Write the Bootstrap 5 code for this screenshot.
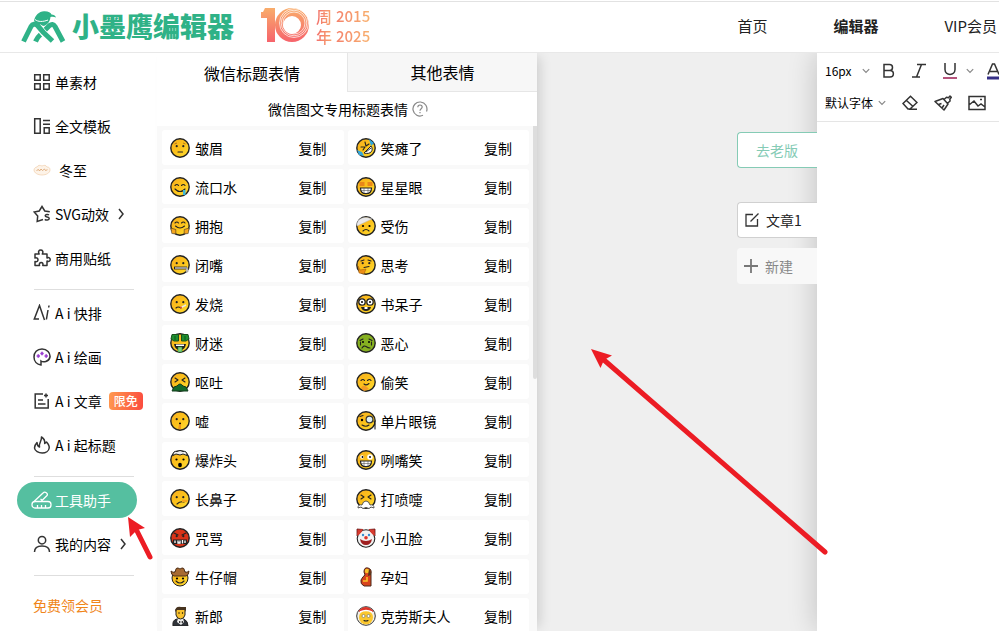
<!DOCTYPE html>
<html lang="zh-CN">
<head>
<meta charset="utf-8">
<meta name="viewport" content="width=device-width, initial-scale=1">
<title>小墨鹰编辑器</title>
<link href="https://cdn.jsdelivr.net/npm/bootstrap@5.3.0/dist/css/bootstrap.min.css" rel="stylesheet">
<style>
  body { font-family: "Noto Sans CJK SC", "Noto Sans", sans-serif; font-size: 14px; line-height: 20px; color: #000; background: #fff; }
  button { color: inherit; }
  svg { flex-shrink: 0; display: block; }
  .ln { fill: none; stroke: #333; stroke-width: 1.5; }
  .site-head { height: 53px; border-bottom: 1px solid #e8e8e8; background: linear-gradient(#fff 1px, #e2e2e2 1px, #e2e2e2 2px, #fff 2px); z-index: 5; }
  .brand { color: #2fb287; font-size: 27px; font-weight: 900; line-height: 40px; text-decoration: none; padding-left: 20px; gap: 6px; }
  .anniv { margin-left: 26px; gap: 6px; }
  .anniv span { line-height: 20px; background: linear-gradient(90deg, #f2706c, #f8a56d); -webkit-background-clip: text; background-clip: text; color: transparent; font-weight: 500; }
  .anniv .zh { font-size: 16px; }
  .anniv .yr { font-size: 15px; background-image: linear-gradient(90deg, #f4826c, #f8b06d); }
  .top-links { gap: 66px; font-size: 15px; padding-right: 2px; }
  .top-links a { color: #222; text-decoration: none; white-space: nowrap; }

  .side { width: 157px; padding: 7px 0 0 17px; }
  .side-link { height: 36px; margin: 4px 0; width: 120px; padding-left: 16px; gap: 4px; color: #000; text-decoration: none; white-space: nowrap; border-radius: 18px; flex-shrink: 0; }
  .side-link.on { background: #55bfa0; color: #fff; padding-left: 14px; gap: 3px; }
  .side-rule { width: 100px; margin: 9px 0 1px 17px; border-top: 1px solid #dedede; opacity: 1; flex-shrink: 0; }
  .hot { background: linear-gradient(100deg, #ff9a50, #fb4a3e); color: #fff; font-size: 12px; line-height: 18px; font-weight: 500; border-radius: 4px; padding: 0 5px; margin-left: 3px; }
  .side .vip { color: #f08519; margin-top: 10px; }

  .panel { width: 380px; background: #fff; box-shadow: 6px 0 12px -4px rgba(0,0,0,.16); }
  .tab-btn { height: 39px; font-size: 16px; border: 0; background: #fff; }
  .tab-btn.off { background: #f7f7f7; border-left: 1px solid #e6e6e6; border-bottom: 1px solid #e6e6e6; }
  .hint { height: 34px; gap: 4px; padding-left: 2px; }
  .scroller { background: #f9f9f9; }
  .thumb { width: 4px; height: 253px; background: #ddd; border-radius: 0 0 2px 2px; }
  .cards { display: grid; grid-template-columns: 1fr 1fr; gap: 4px; padding: 4px 4px 0 5px; }
  .cell { height: 35px; background: #fff; border-radius: 3px; padding: 0 17px 0 8px; gap: 5px; }
  .cell button { border: 0; background: none; padding: 0; margin-left: auto; }
  .cell svg { width: 20px; height: 20px; }
  .k { fill: none; stroke: #222; stroke-width: 1.1; stroke-linecap: round; stroke-linejoin: round; }

  .board { background: #efefef; }
  .side-btns { width: 80px; padding-top: 79px; z-index: 2; }
  .side-btns button { height: 36px; border: 1px solid #d0d0d0; border-right: 0; border-radius: 4px 0 0 4px; background: #fff; padding: 0 0 0 7px; gap: 7px; color: #222; white-space: nowrap; }
  .side-btns .old { border-color: #85cbb5; color: #85cbb5; padding-left: 18px; margin-bottom: 34px; }
  .side-btns .new { background: #f8f8f8; border-color: #f8f8f8; color: #888; margin-top: 10px; padding-left: 6px; }

  .editor { width: 182px; background: #fff; box-shadow: 0 0 28px rgba(0,0,0,.2); z-index: 1; }
  .tools { border-bottom: 1px solid #e5e5e5; padding: 2px 0 2px 8px; }
  .tool-row { height: 32px; width: 200px; }
  .tool-row select { appearance: none; border: 0; background: none; padding: 0; font-size: 12px; color: #000; flex-shrink: 0; }
  .tool-row button { border: 0; background: none; padding: 0; }
  .tool-row .pick-size { width: 37px; }
  .tool-row .pick-font { width: 53px; }
  .arrows { left: 0; top: 0; z-index: 9; pointer-events: none; }
</style>
<script src="https://cdn.jsdelivr.net/npm/bootstrap@5.3.0/dist/js/bootstrap.bundle.min.js"></script>
</head>
<body class="vh-100 overflow-hidden position-relative d-flex flex-column">

<svg width="0" height="0" class="position-absolute" aria-hidden="true">
  <defs>
    <linearGradient id="gface" x1="0" y1="0" x2="1" y2="1"><stop offset="0" stop-color="#f6ad20"/><stop offset=".5" stop-color="#fcc21b"/><stop offset="1" stop-color="#ffdf35"/></linearGradient>
    <linearGradient id="gten" gradientUnits="userSpaceOnUse" x1="0" y1="0" x2="0" y2="36"><stop offset="0" stop-color="#f9b16b"/><stop offset="1" stop-color="#f6636b"/></linearGradient>
    <symbol id="face" viewBox="0 0 20 20"><circle cx="10" cy="10" r="9.200" fill="url(#gface)" stroke="#222" stroke-width="1.400"/></symbol>
    <symbol id="eyes" viewBox="0 0 20 20"><circle cx="6.700" cy="8.200" r="1.100" fill="#222"/><circle cx="13.300" cy="8.200" r="1.100" fill="#222"/></symbol>
    <symbol id="grin" viewBox="0 0 20 20"><path d="M4.500 11h11c0 3.500-2 5.700-5.500 5.700S4.500 14.500 4.500 11z" fill="#fff" stroke="#222" stroke-width="1.200"/><path d="M5 13.500h10M8 11v5M12 11v5" stroke="#555" stroke-width=".6"/></symbol>
    <symbol id="chev" viewBox="0 0 8 8"><path d="M.8 2.200L4 5.500l3.200-3.300" fill="none" stroke="#888" stroke-width="1.200"/></symbol>
  </defs>
</svg>

<header class="site-head d-flex align-items-center position-relative flex-shrink-0">
  <a class="brand d-flex align-items-center" href="#">
    <svg width="46" height="33" viewBox="0 0 46 33">
      <path d="M14 11C15 5 19 1.500 24 1.200c4-.2 7 1.300 7.500 3.300 2 0 4 1 4.500 3-2-1-4-1-5.500-.5C30 11 28 14.500 24 16c-4-1-8-2-10-5z" fill="#2fb287"/>
      <path d="M15 9.500c3 2.500 8 2.500 13 .5" fill="none" stroke="#fff" stroke-width="1"/>
      <g fill="none" stroke-linejoin="round">
        <path d="M15.500 31.500c2-5 5-7 8-10l6-6c2-1.500 4-1.500 5.500 1l8 15" stroke="#2fb287" stroke-width="5"/>
        <path d="M18 16.500l6 7 8 7.500" stroke="#fff" stroke-width="7"/>
        <path d="M3.500 31.500l7.500-15c1.500-2.500 4.500-3 6.500-1l6 7 9 8.500" stroke="#2fb287" stroke-width="5"/>
      </g>
    </svg>
    <span>小墨鹰编辑器</span>
  </a>
  <div class="anniv d-flex align-items-center">
    <svg width="50" height="40" viewBox="0 0 50 40" role="img" aria-label="10">
      <path d="M5 2h10v34H7V12H1V6h2z" fill="url(#gten)"/>
      <circle cx="32" cy="19" r="13" fill="none" stroke="url(#gten)" stroke-width="8"/>
      <g fill="none" stroke="#fff" stroke-width=".7"><circle cx="34" cy="17" r="11"/><circle cx="34" cy="17" r="12.800"/><circle cx="34" cy="17" r="14.500"/></g>
    </svg>
    <div class="d-flex gap-1">
      <span class="zh">周<br>年</span><span class="yr">2015<br>2025</span>
    </div>
  </div>
  <nav class="top-links d-flex ms-auto">
    <a href="#">首页</a><a href="#" class="fw-bold">编辑器</a><a href="#">VIP会员</a>
  </nav>
</header>

<main class="d-flex flex-grow-1 overflow-hidden">
  <nav class="side flex-shrink-0 d-flex flex-column">
    <a href="#" class="side-link d-flex align-items-center"><svg width="18" height="18" viewBox="0 0 18 18"><path class="ln" d="M1.700 1.700h5.500v5.500H1.700zM10.700 1.700h5.500v5.500h-5.500zM1.700 10.700h5.500v5.500H1.700zM10.700 10.700h5.500v5.500h-5.500z"/></svg>单素材</a>
    <a href="#" class="side-link d-flex align-items-center"><svg width="18" height="18" viewBox="0 0 18 18"><path class="ln" d="M1.700 1.700h5.500v14.500H1.700zM11.200 10.700h5v5.500h-5zM10 3.500h7M10 7.200h7"/></svg>全文模板</a>
    <a href="#" class="side-link d-flex align-items-center"><svg width="18" height="18" viewBox="0 0 18 18"><path d="M1 9c0-2 2-3 3-3 1-2 3-2 5-1 2-1 4-1 5 1 2 0 3 1 3 3 0 3-4 5-8 5s-8-2-8-5z" fill="#fdf3e8" stroke="#f0cfac" stroke-width=".7"/><path d="M3.500 9.500l2-1 1 1.500 1.500-2 1.500 1.500 2-1.500 1 1.500 2-.8" fill="none" stroke="#d9a06a" stroke-width=".8"/></svg><span class="ms-1">冬至</span></a>
    <a href="#" class="side-link d-flex align-items-center"><svg width="18" height="18" viewBox="0 0 18 18"><path class="ln" d="M10 14.500L4.200 16.500l.5-5.500L1.200 7l5-1L9 1.500 11.800 6l5 .8"/><path class="ln" d="M16 10c-1-.8-3.800-.8-3.800.8 0 1.700 4 .8 4 2.700 0 1.800-3.200 1.800-4.400.8"/></svg>SVG动效<svg class="ms-1" width="8" height="12" viewBox="0 0 8 12"><path class="ln" d="M2 1l4 5-4 5"/></svg></a>
    <a href="#" class="side-link d-flex align-items-center"><svg width="18" height="18" viewBox="0 0 18 18"><path class="ln" stroke-linejoin="round" d="M2 5h4.200C4.800 2.500 6 1 7.700 1s3 1.500 1.600 4H14v4c2-1 3.200 0 3.200 1.500S16 13 14 12v4.500H9.800c.5-2-.3-3-1.600-3s-2.200 1-1.700 3H2V12.500c2 .5 3-.4 3-1.700S4 8.500 2 9z"/></svg>商用贴纸</a>
    <hr class="side-rule">
    <a href="#" class="side-link d-flex align-items-center"><svg width="18" height="18" viewBox="0 0 18 18"><path class="ln" d="M6 15H1.300L6.500 1.500 11.500 16M15 6l-1.600 9.500M16 1.500l-.3 2"/></svg>A i 快排</a>
    <a href="#" class="side-link d-flex align-items-center"><svg width="18" height="18" viewBox="0 0 18 18"><path class="ln" d="M8 17v-4c2 1.600 8 1 9-4 .5-4-3-8-8-8S1 4.500 1 9s3 7.500 7 8z"/><path d="M5.300 6.300v3.400M3.600 8h3.400M9 3.800v3.400M7.300 5.500h3.400M13.200 6.300v3.400M11.500 8h3.400" stroke="#9a3fd0" stroke-width="1.700"/></svg>A i 绘画</a>
    <a href="#" class="side-link d-flex align-items-center"><svg width="18" height="18" viewBox="0 0 18 18"><path class="ln" d="M10 2H2.200v14h13V7M5 8h5M5 12h7.500M13 1.500v4M11 3.500h4"/></svg>A i 文章 <span class="hot">限免</span></a>
    <a href="#" class="side-link d-flex align-items-center"><svg width="18" height="18" viewBox="0 0 18 18"><path class="ln" stroke-linejoin="round" d="M6.500 11C5.500 7 9 5 8.500 1c2.500 1.500 3.500 4 3.200 6.500L13.500 6c2 2.300 3 4.200 2.700 6-.4 3-3.500 5-7 5S1.800 15 1.500 12c0-2 1-4 2.500-5.500 0 2 .6 3.800 2.500 4.500z"/></svg>A i 起标题</a>
    <hr class="side-rule">
    <a href="#" class="side-link on d-flex align-items-center"><svg width="21" height="18" viewBox="0 0 21 18"><g fill="none" stroke="#fff" stroke-width="1.300"><rect x="1" y="10.500" width="19" height="6.500" rx="3"/><path d="M2.500 11L12 2c2-2 5.500.5 4 2.500l-6 6M6.500 14v3M10.500 14v3M14.500 14v3M9.500 8l1.500 1"/></g></svg><span>工具助手</span></a>
    <a href="#" class="side-link d-flex align-items-center"><svg width="18" height="18" viewBox="0 0 18 18"><circle class="ln" cx="9" cy="5.200" r="3.700"/><path class="ln" d="M1.500 17c0-4 3-6 7.500-6s7.500 2 7.500 6"/></svg>我的内容<svg class="ms-1" width="8" height="12" viewBox="0 0 8 12"><path class="ln" d="M2 1l4 5-4 5"/></svg></a>
    <hr class="side-rule">
    <a href="#" class="side-link vip d-flex align-items-center">免费领会员</a>
  </nav>

  <section class="panel flex-shrink-0 d-flex flex-column position-relative z-1">
    <div class="d-flex">
      <button class="tab-btn w-50">微信标题表情</button><button class="tab-btn off w-50">其他表情</button>
    </div>
    <div class="hint d-flex align-items-center justify-content-center flex-shrink-0">微信图文专用标题表情<svg width="16" height="16" viewBox="0 0 16 16"><path d="M11 14.300A7 7 0 1 1 14.500 10.500" fill="none" stroke="#888" stroke-width="1.200"/><path d="M5.800 6.300c0-3 4.400-3 4.400-.2C10.200 7.700 8 7.800 8 9.700M8 11v1.300" fill="none" stroke="#888" stroke-width="1.200"/></svg></div>
    <div class="scroller d-flex flex-grow-1">
      <div class="cards flex-grow-1 align-content-start">
        <div class="cell d-flex align-items-center"><svg viewBox="0 0 20 20"><use href="#face"/><use href="#eyes"/><path class="k" d="M8 14h4.500"/><path d="M4.500 6l2.500-1M13 5l2.500 1" stroke="#b5761a" fill="none"/></svg>皱眉<button>复制</button></div>
        <div class="cell d-flex align-items-center"><svg viewBox="0 0 20 20"><use href="#face"/><path d="M1 12l5 2 2 4-5-1zM13 1l5 4-3 3z" fill="#31a8dc"/><path class="k" d="M5 9l4 0-2 3M9 4l1 4 3-2"/><path d="M8 15l7-7c3 4 0 9-7 7z" fill="#fff" stroke="#222"/><path d="M10 14l5-4" stroke="#333"/></svg>笑瘫了<button>复制</button></div>

        <div class="cell d-flex align-items-center"><svg viewBox="0 0 20 20"><use href="#face"/><path class="k" d="M5 8.500q2-2 3.500 0M11.500 8.500q2-2 3.500 0M5 12q5 5 10 0"/><path d="M13 13h2.500v5H13z" fill="#3cb7dc"/></svg>流口水<button>复制</button></div>
        <div class="cell d-flex align-items-center"><svg viewBox="0 0 20 20"><use href="#face"/><path d="M3.500 5h5v4h-5zM11.500 5h5v4h-5z" fill="#e98719"/><use href="#grin"/></svg>星星眼<button>复制</button></div>

        <div class="cell d-flex align-items-center"><svg viewBox="0 0 20 20"><use href="#face"/><path class="k" d="M5 7q2-2 3.500 0M11.500 7q2-2 3.500 0M5.500 10q4.500 4 9 0"/><path d="M.8 12l5 1.500V18l-4-.5zM19.200 12l-5 1.500V18l4-.5z" fill="#f4a51f" stroke="#222" stroke-width=".5"/></svg>拥抱<button>复制</button></div>
        <div class="cell d-flex align-items-center"><svg viewBox="0 0 20 20"><use href="#face"/><path d="M1 10C0 3 8-1 16 3z" fill="#e8e8ea" stroke="#bbb" stroke-width=".5"/><circle cx="7" cy="10" r="1.100"/><circle cx="13.500" cy="10" r="1.100"/><path class="k" d="M7 15q3-3 6 0"/></svg>受伤<button>复制</button></div>

        <div class="cell d-flex align-items-center"><svg viewBox="0 0 20 20"><use href="#face"/><use href="#eyes"/><path d="M4 13h13" stroke="#222" stroke-width="2.800"/><path d="M5 13h12" stroke="#ccc" stroke-width="1.400"/><path d="M16 13h2v4h-2z" fill="#ccc" stroke="#666" stroke-width=".4"/></svg>闭嘴<button>复制</button></div>
        <div class="cell d-flex align-items-center"><svg viewBox="0 0 20 20"><use href="#face"/><use href="#eyes"/><path class="k" d="M5 6l3-1M12 5l3 1M8 12.500l5-1"/><path d="M2 11l2 4 6-1-2 5-5-1z" fill="#ec8e16" stroke="#9a5a0c" stroke-width=".5"/></svg>思考<button>复制</button></div>

        <div class="cell d-flex align-items-center"><svg viewBox="0 0 20 20"><use href="#face"/><use href="#eyes"/><path class="k" d="M6 14q2-2 5 0"/><path d="M11 13.500l5-2.500" stroke="#e9e9e9" stroke-width="1.400"/><circle cx="11" cy="13.500" r="1" fill="#d43"/></svg>发烧<button>复制</button></div>
        <div class="cell d-flex align-items-center"><svg viewBox="0 0 20 20"><use href="#face"/><circle cx="6" cy="8" r="3.200" fill="#fff" stroke="#222" stroke-width="1.300"/><circle cx="14" cy="8" r="3.200" fill="#fff" stroke="#222" stroke-width="1.300"/><circle cx="6" cy="8" r="1"/><circle cx="14" cy="8" r="1"/><path d="M5 13h10q-1 4-5 4t-5-4z" fill="#222"/><path d="M8.500 13h3v2h-3z" fill="#fff"/></svg>书呆子<button>复制</button></div>

        <div class="cell d-flex align-items-center"><svg viewBox="0 0 20 20"><use href="#face"/><path d="M2 1.500h6.500V8H4L1 6zM11.500 1.500H18l1 4.500-3 2h-4.500z" fill="#1f8f30" stroke="#174f1c"/><path d="M5 3v4M15 3v4" stroke="#0c5a1a"/><path d="M4 11h12q-1 6-6 6t-6-6z" fill="#222"/><path d="M6 11.500h8V13H6z" fill="#fff"/><path d="M8 14h4v5H8z" fill="#7fd07f" stroke="#2a8a34" stroke-width=".6"/></svg>财迷<button>复制</button></div>
        <div class="cell d-flex align-items-center"><svg viewBox="0 0 20 20"><circle cx="10" cy="10" r="9.200" fill="#86b021" stroke="#222" stroke-width="1.400"/><circle cx="7" cy="9" r="1"/><circle cx="13" cy="9" r="1"/><path class="k" d="M4 7.500l3-1.500M16 7.500l-3-1.500M6 15q2-3 4-1.500T14 15M4.500 9v3M15.500 9v3"/></svg>恶心<button>复制</button></div>

        <div class="cell d-flex align-items-center"><svg viewBox="0 0 20 20"><use href="#face"/><path class="k" d="M5 6l3 2-3 2M15 6l-3 2 3 2"/><path d="M2 19l2-4 3-1q3-4 6 0l3 1 2 4z" fill="#146b2b" stroke="#123c1c"/></svg>呕吐<button>复制</button></div>
        <div class="cell d-flex align-items-center"><svg viewBox="0 0 20 20"><use href="#face"/><path class="k" d="M5 8.500q2-2 3.500 0M11.500 8.500q2-2 3.500 0M8 12q2 2 5-.5"/><path d="M5 16q2-4 6-1l2 2-5 2z" fill="#f39b26"/></svg>偷笑<button>复制</button></div>

        <div class="cell d-flex align-items-center"><svg viewBox="0 0 20 20"><use href="#face"/><use href="#eyes"/><circle cx="10" cy="12.500" r="1"/><path d="M9 13.500h2V18H8z" fill="#ec9621"/></svg>嘘<button>复制</button></div>
        <div class="cell d-flex align-items-center"><svg viewBox="0 0 20 20"><use href="#face"/><circle cx="6" cy="9" r="1.200"/><circle cx="13.500" cy="8.500" r="3.400" fill="#dceef2" stroke="#333" stroke-width="1.200"/><path class="k" d="M4 5.500l3-1M6 14q4 2.500 7 0M18 10l1 3v5"/></svg>单片眼镜<button>复制</button></div>

        <div class="cell d-flex align-items-center"><svg viewBox="0 0 20 20"><use href="#face"/><path d="M3 5.500q0-5 4-4 3-2 6 0 4-1 4 4l-4-1.500-3 1-4-1z" fill="#eee" stroke="#222"/><circle cx="6.500" cy="9.500" r="1.100"/><circle cx="13.500" cy="9.500" r="1.100"/><ellipse cx="10" cy="15" rx="1.900" ry="2.200"/></svg>爆炸头<button>复制</button></div>
        <div class="cell d-flex align-items-center"><svg viewBox="0 0 20 20"><use href="#face"/><circle cx="6" cy="7" r="1.800" fill="#fff"/><circle cx="14" cy="7" r="2.800" fill="#fff"/><circle cx="6.500" cy="7" r=".9"/><circle cx="14" cy="7" r=".9"/><use href="#grin"/></svg>咧嘴笑<button>复制</button></div>

        <div class="cell d-flex align-items-center"><svg viewBox="0 0 20 20"><use href="#face"/><use href="#eyes"/><path class="k" d="M7 15q3-3 7-2"/><path d="M12 10.500l6 .5-1 2-5 0z" fill="#f3a51f"/></svg>长鼻子<button>复制</button></div>
        <div class="cell d-flex align-items-center"><svg viewBox="0 0 20 20"><use href="#face"/><path class="k" d="M5 6l3 2-3 2M15 6l-3 2 3 2"/><path d="M2 19q0-4 4-3 1-4 4-4t4 4q4-1 4 3l-3-1-2 1.500-3-1-3 1-2-1.500z" fill="#fff" stroke="#333" stroke-width=".8"/></svg>打喷嚏<button>复制</button></div>

        <div class="cell d-flex align-items-center"><svg viewBox="0 0 20 20"><circle cx="10" cy="10" r="9.200" fill="#d93318" stroke="#222" stroke-width="1.400"/><use href="#eyes"/><path class="k" d="M4 5l4 2M16 5l-4 2"/><path d="M3 11.500h14v4.500H3z" fill="#222"/><path d="M5 12.500v2.500M8 12.500v2.500h2v-2.500M12.500 12v3.500M15 12.500v2.500" stroke="#fff" stroke-width="1.300" fill="none"/></svg>咒骂<button>复制</button></div>
        <div class="cell d-flex align-items-center"><svg viewBox="0 0 20 20"><path d="M1 8V1l6 .5zM19 8V1l-6 .5z" fill="#d73b2f" stroke="#611" stroke-width=".8"/><circle cx="10" cy="10.500" r="8.800" fill="#f2f2f2" stroke="#222" stroke-width="1.100"/><path d="M1 8q0-6 6-7-1 4-6 7zM19 8q0-6-6-7 1 4 6 7z" fill="#d73b2f"/><circle cx="7" cy="7" r="1.200" fill="#348ed0"/><circle cx="13" cy="7" r="1.200" fill="#348ed0"/><circle cx="10" cy="9.800" r="1.800" fill="#df3529"/><path d="M4 11q6 4 12 0-1 6-6 6t-6-6z" fill="#9f1f20"/></svg>小丑脸<button>复制</button></div>

        <div class="cell d-flex align-items-center"><svg viewBox="0 0 20 20"><circle cx="10" cy="11" r="8" fill="url(#gface)" stroke="#222"/><path d="M1 4q2 2 4 1 1-5 3-4l2 1 2-1q2-1 3 4 2 1 4-1 0 4-3 5H4Q1 8 1 4z" fill="#a76a32" stroke="#4f301a"/><circle cx="7" cy="11.500" r="1.100"/><circle cx="13" cy="11.500" r="1.100"/><path class="k" d="M6 14q4 4 8 0"/></svg>牛仔帽<button>复制</button></div>
        <div class="cell d-flex align-items-center"><svg viewBox="0 0 20 20"><path d="M8 5q0-5 4-4 4 1 3 6v12H8q-4-2-3-6 2-4 4-5z" fill="#d8441d" stroke="#48291c"/><circle cx="11" cy="4" r="2.200" fill="#fac32b"/><path d="M13 2q2 1 2 6l-3 1z" fill="#57371c"/><path d="M11 10v4H7" fill="none" stroke="#fac32b" stroke-width="1.600"/></svg>孕妇<button>复制</button></div>

        <div class="cell d-flex align-items-center"><svg viewBox="0 0 20 20"><path d="M3 20q-1-6 4-7h7q4 2 4 7z" fill="#30343a" stroke="#222"/><path d="M8 12h5l1 4-3 3-4-3z" fill="#eee"/><path d="M6 3h9v6q-1 4-4.500 4T6 9z" fill="#f9c12c" stroke="#222"/><path d="M5 6q0-6 6-5h5v5l-1-2H7z" fill="#47331f"/><circle cx="9" cy="7" r=".7"/><circle cx="12.500" cy="7" r=".7"/><path d="M9 15l2 1 2-1v2l-2-1-2 1z"/></svg>新郎<button>复制</button></div>
        <div class="cell d-flex align-items-center"><svg viewBox="0 0 20 20"><circle cx="10" cy="10" r="9.300" fill="#f2f0e9" stroke="#333"/><circle cx="10" cy="11.500" r="7" fill="#fbc72e"/><path d="M2.500 5q7-8 15 0l-1 1q-7-3-13 0z" fill="#dc352a"/><path d="M4 6q6-3 12 0" stroke="#fff" stroke-width="1.600" fill="none"/><circle cx="7.500" cy="10" r="1.500" fill="#fff" stroke="#776" stroke-width=".7"/><circle cx="12.500" cy="10" r="1.500" fill="#fff" stroke="#776" stroke-width=".7"/><path class="k" d="M8 14.500q2 1 4 0"/></svg>克劳斯夫人<button>复制</button></div>
      </div>
      <div class="thumb flex-shrink-0"></div>
    </div>
  </section>

  <section class="board flex-grow-1 d-flex justify-content-end">
    <div class="side-btns d-flex flex-column position-relative">
      <button class="old text-start">去老版</button>
      <button class="d-flex align-items-center"><svg width="14" height="14" viewBox="0 0 14 14"><path d="M8 1.500H1v11.500h11.500V6M5.500 8.500l8-8" fill="none" stroke="#333" stroke-width="1.300"/></svg>文章1</button>
      <button class="new d-flex align-items-center"><svg width="14" height="14" viewBox="0 0 14 14"><path d="M0 7h14M7 0v14" stroke="#777" stroke-width="1.800"/></svg>新建</button>
    </div>
  </section>

  <section class="editor flex-shrink-0 position-relative">
    <div class="tools overflow-hidden">
      <div class="tool-row d-flex align-items-center">
        <select class="pick-size" aria-label="字号"><option>16px</option></select>
        <svg width="8" height="8"><use href="#chev"/></svg>
        <button aria-label="加粗" class="ms-2"><svg width="18" height="18" viewBox="0 0 18 18"><path class="ln" d="M6 2.500h5.500c4 0 4 6 0 6H6zM6 8.500h6c4.500 0 4.500 6.500 0 6.500H6z"/></svg></button>
        <button aria-label="斜体" class="ms-3"><svg width="14" height="18" viewBox="0 0 14 18"><path class="ln" d="M5 2.500h9M0 15h8M9.500 2.500l-5 12.500"/></svg></button>
        <button aria-label="下划线" class="ms-3"><svg width="16" height="18" viewBox="0 0 16 18"><path class="ln" d="M3 1v6.500c0 6.500 10 6.500 10 0V1"/><path d="M1 16h14" stroke="#b5547c" stroke-width="2"/></svg></button>
        <svg width="8" height="8" class="ms-2"><use href="#chev"/></svg>
        <button aria-label="文字颜色" class="ms-2"><svg width="22" height="18" viewBox="0 0 22 18"><path class="ln" d="M6 12.500L10.500 2h2L17 12.500M8 9.500h7"/><path d="M5 16h14" stroke="#352f86" stroke-width="3"/></svg></button>
      </div>
      <div class="tool-row d-flex align-items-center">
        <select class="pick-font" aria-label="字体"><option>默认字体</option></select>
        <svg width="8" height="8"><use href="#chev"/></svg>
        <button aria-label="清除格式" class="ms-3"><svg width="16" height="16" viewBox="0 0 16 16"><path class="ln" d="M1 8.500L8.500 1.200 15 7.500 8 14H6zM4.500 5.500l6 5.500M7 14.300h8"/></svg></button>
        <button aria-label="格式刷" class="ms-3"><svg width="18" height="16" viewBox="0 0 18 16"><path class="ln" stroke-linejoin="round" d="M1 6.500L9 3.500 14 9l-4 6zM10 4.500l2.500-2.200 2 .4L16 1l1.300 1.200-1.500 2 .3 1.800-2.600 2.300M8 13l2-3M4.500 9.500l3-1"/></svg></button>
        <button aria-label="图片" class="ms-3"><svg width="18" height="16" viewBox="0 0 18 16"><path class="ln" d="M1 1.500h16v13H1zM1 10l5-4 4 5 3-2 4 3M12 4.500h2"/></svg></button>
      </div>
    </div>
  </section>
</main>

<svg class="arrows position-absolute" width="840" height="570" viewBox="0 0 840 570" fill="#ec1c24" stroke="#ec1c24" aria-hidden="true">
  <path d="M604 360L825 552" stroke-width="5" stroke-linecap="round"/>
  <path d="M591 349L612 355.500 604 360 600.500 368z" stroke="none"/>
  <path d="M137 531L150 557" stroke-width="5" stroke-linecap="round"/>
  <path d="M128 517L145 528 137 530 130 537z" stroke="none"/>
</svg>
</body>
</html>
